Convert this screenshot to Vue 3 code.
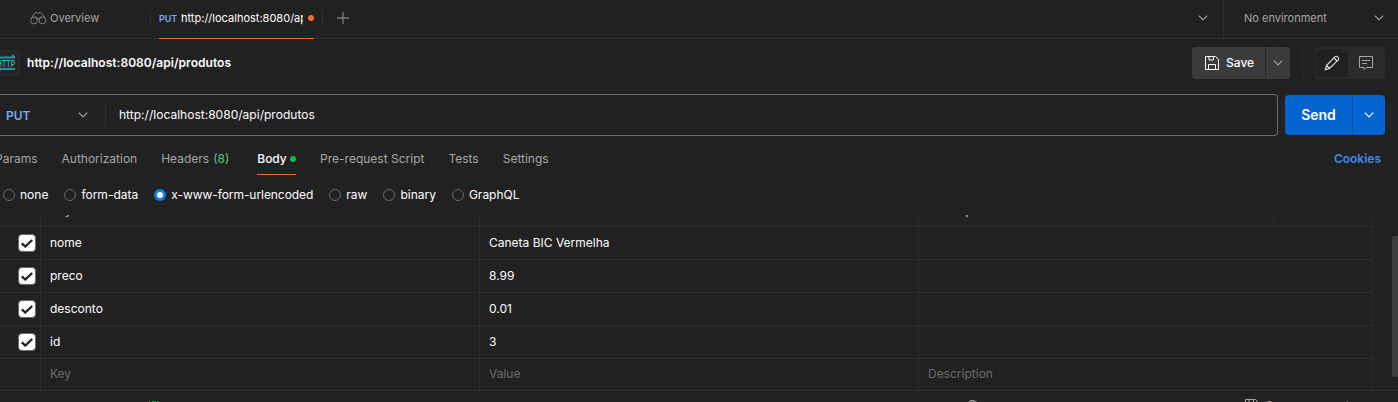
<script setup>
const methods = [
  { label: 'Params' },
  { label: 'Authorization' },
  { label: 'Headers', count: '(8)' },
  { label: 'Body', active: true },
  { label: 'Pre-request Script' },
  { label: 'Tests' },
  { label: 'Settings' },
]
const bodyTypes = ['none', 'form-data', 'x-www-form-urlencoded', 'raw', 'binary', 'GraphQL']
const rows = [
  ['nome', 'Caneta BIC Vermelha'],
  ['preco', '8.99'],
  ['desconto', '0.01'],
  ['id', '3'],
]
</script>

<template>
  <div class="app">
    <header class="tabbar">
      <div class="tab overview">
        <svg width="17" height="14" viewBox="0 0 17 14" class="ico">
          <circle cx="4" cy="9.5" r="3.4" /><circle cx="12.4" cy="9.5" r="3.4" />
          <path d="M1.300 7.300 4.600 2.200Q5.800.7 7.400 1.900M15.200 7.300 11.800 2.200Q10.600.7 9 1.900M7.400 1.900q.8.7 1.600 0M7.200 8.200q1-.9 2 0M5.300 5.300l2 2.600M11.100 5.300l-2 2.600" />
        </svg>
        <span>Overview</span>
      </div>
      <i class="sep"></i>
      <div class="tab request">
        <b>PUT</b><span class="clip">http://localhost:8080/api/produtos</span><i class="dot orange"></i>
      </div>
      <i class="sep"></i>
      <svg class="plus" width="12" height="12" viewBox="0 0 12 12"><path d="M6 0v12M0 6h12" /></svg>
      <svg class="chev more" width="10" height="6" viewBox="0 0 10 6"><path d="M.8.7 5 4.900 9.200.7" /></svg>
      <div class="env">
        <span>No environment</span>
        <svg class="chev" width="10" height="6" viewBox="0 0 10 6"><path d="M.8.7 5 4.900 9.200.7" /></svg>
      </div>
    </header>

    <section class="titlebar">
      <div class="http">
        <svg width="21" height="18" viewBox="0 0 21 18">
          <path d="M3 3.500h18M18 .8l2.600 2.700M3 15h18M6 17.800l-2.600-2.800" stroke="#2f8f9c" stroke-width="1.900" />
          <text x="3" y="12.500" textLength="18" lengthAdjust="spacingAndGlyphs">HTTP</text>
        </svg>
      </div>
      <h1>http://localhost:8080/api/produtos</h1>
      <div class="save">
        <button class="savemain">
          <svg width="14" height="14" viewBox="0 0 14 14"><path d="M.5.5h10l3 3v10H.5zM3.500 13.500v-5h7v5M4 .5v3.500h4.500V.5" /></svg>
          <span>Save</span>
        </button>
        <button class="savemore"><svg class="chev" width="10" height="6" viewBox="0 0 10 6"><path d="M.8.7 5 4.900 9.200.7" /></svg></button>
      </div>
      <i class="vline"></i>
      <div class="modes">
        <span class="on"><svg width="16" height="16" viewBox="0 0 16 16" fill="none" stroke="#e6e6e6" stroke-width="1.100"><path d="m1.300 14.700 1.200-4.200 8.600-8.800a1.500 1.500 0 0 1 2.200 0l1 1a1.500 1.500 0 0 1 0 2.200L5.500 13.500zM10 3l3 3M2.500 10.500l3 3" /></svg></span>
        <span><svg width="14" height="14" viewBox="0 0 14 14" fill="none" stroke="#a6a6a6"><path d="M.5.5h13v11H7l-2 2v-2H.5zM3 4.500h8M3 7.500h5" /></svg></span>
      </div>
    </section>

    <section class="urlrow">
      <div class="urlbox">
        <div class="method"><b>PUT</b><svg class="chev" width="10" height="6" viewBox="0 0 10 6"><path d="M.8.7 5 4.900 9.200.7" /></svg></div>
        <span class="url">http://localhost:8080/api/produtos</span>
      </div>
      <div class="send"><b>Send</b><span><svg class="chev white" width="10" height="6" viewBox="0 0 10 6"><path d="M.8.7 5 4.900 9.200.7" /></svg></span></div>
    </section>

    <nav class="subtabs">
      <div v-for="m in methods" :key="m.label" class="subtab" :class="{ active: m.active, counted: m.count }">
        {{ m.label }}<em v-if="m.count">{{ m.count }}</em><i v-if="m.active" class="dot green"></i>
      </div>
      <a class="cookies">Cookies</a>
    </nav>

    <div class="types">
      <label v-for="t in bodyTypes" :key="t" :class="{ long: t.length > 12 }"><i class="radio" :class="{ checked: t === 'x-www-form-urlencoded' }"></i>{{ t }}</label>
    </div>

    <main class="table">
      <div class="row head">
        <div></div><div><span>Key</span></div><div><span>Value</span></div><div><span>Description</span></div><div class="bulk"></div>
      </div>
      <div v-for="r in rows" :key="r[0]" class="row">
        <div class="check"><span class="box"><svg width="12" height="9" viewBox="0 0 12 9"><path d="M.8 4.300 4.300 7.500 11.200 1" /></svg></span></div>
        <div>{{ r[0] }}</div><div>{{ r[1] }}</div><div></div>
      </div>
      <div class="row blank"><div></div><div>Key</div><div>Value</div><div>Description</div></div>
      <i class="scroll"></i>
    </main>

    <footer class="response">
      <span class="count">(5)</span>
      <svg class="globe" width="13" height="13" viewBox="0 0 13 13"><circle cx="6.500" cy="6.500" r="6" /><ellipse cx="6.500" cy="6.500" rx="2.800" ry="6" /></svg>
      <svg class="disk" width="14" height="14" viewBox="0 0 14 14"><path d="M.5.5h10l3 3v10H.5zM4 .5v4h4.500V.5" /></svg>
      <span class="example">Save as example</span>
    </footer>
  </div>
</template>

<style>
body { background: #212121; overflow: hidden; }
</style>

<style scoped>
* { box-sizing: border-box; }
.app { width: 1398px; height: 402px; overflow: hidden; background: #212121; color: #fff; font: 12px/16px Inter, sans-serif; display: flex; flex-direction: column; }
svg { display: block; flex: none; fill: none; }
button { border: 0; padding: 0; margin: 0; background: none; color: inherit; font: inherit; }
i { display: block; flex: none; }
.chev { stroke: #a6a6a6; stroke-width: 1.1; }
.white { stroke: #fff; }
.dot { width: 6px; height: 6px; border-radius: 50%; }
.orange { background: #ff6c37; }
.green { background: #0cbb52; margin-left: 3px; }

.tabbar { height: 39px; flex: none; display: flex; align-items: center; border-bottom: 1px solid #2e2e2e; padding-left: 30px; padding-bottom: 2px; color: #a6a6a6; font-size: 11px; }
.overview { width: 120px; display: flex; gap: 3px; align-items: center; }
.ico { stroke: #808080; }
.sep { width: 1px; height: 16px; background: #303030; }
.request { width: 155px; height: 39px; margin: 3px 8px 0; padding-bottom: 2px; display: flex; align-items: center; border-bottom: 1px solid #ff6c37; color: #fff; }
.request b { font-size: 9px; font-weight: 600; letter-spacing: -0.1px; color: #74aef6; width: 22px; padding-top: 1px; }
.clip { width: 121.5px; overflow: hidden; white-space: nowrap; letter-spacing: 0.01px; }
.request .dot { margin-left: 5.5px; }
.plus { margin-left: 14px; stroke: #7d7d7d; stroke-width: 1.3; }
.more { margin-left: auto; margin-right: 15px; }
.env { width: 175px; height: 38px; margin-bottom: -2px; border-left: 1px solid #2e2e2e; padding: 0 14px 2px 20px; display: flex; align-items: center; justify-content: space-between; }

.titlebar { height: 55px; padding-bottom: 7px; flex: none; display: flex; align-items: center; padding-right: 13px; }
.http { width: 26px; height: 26px; border: 1px solid #2c2c2c; border-radius: 4px; background: #262626; margin-left: -6px; display: flex; align-items: center; }
.http svg { margin-left: -1px; }
.http text { font: 500 9.5px Inter, sans-serif; fill: #2fc0d0; }
h1 { margin: 0 auto 0 7px; font-size: 12px; line-height: 16px; font-weight: 600; letter-spacing: 0.04px; }
.save { display: flex; height: 32px; width: 98px; border-radius: 4px; background: #3b3b3b; overflow: hidden; }
.savemain { width: 73px; padding-left: 13px; display: flex; align-items: center; gap: 7px; font-weight: 500; }
.savemain svg { stroke: #fff; }
.savemore { flex: 1; border-left: 1px solid #292929; display: flex; align-items: center; justify-content: center; }
.vline { width: 1px; height: 32px; background: #2c2c2c; margin: 0 12px; }
.modes { width: 70px; height: 32px; border-radius: 4px; background: #2b2b2b; display: flex; padding: 2px 1px; }
.modes span { width: 32px; height: 28px; border-radius: 3px; display: flex; align-items: center; justify-content: center; }
.modes .on { background: #212121; margin-right: 2px; }

.urlrow { height: 42px; flex: none; display: flex; align-items: center; }
.urlbox { width: 1278px; height: 42px; border: 1px solid #6b6b6b; border-left: 0; border-radius: 0 4px 4px 0; display: flex; align-items: center; }
.method { width: 106px; height: 24px; border-right: 1px solid #303030; padding: 0 17px 0 6px; display: flex; align-items: center; justify-content: space-between; }
.method b { color: #74aef6; font-weight: 600; padding-top: 2px; }
.url { margin-left: 13px; letter-spacing: 0.02px; }
.send { margin-left: 7px; width: 100px; height: 40px; border-radius: 4px; background: #0265d2; display: flex; align-items: center; }
.send b { width: 67px; text-align: center; font-size: 14px; font-weight: 600; }
.send span { flex: 1; height: 40px; border-left: 1px solid #0453ac; display: flex; align-items: center; justify-content: center; }

.subtabs { height: 46px; padding: 7px 17px 7px 0; margin-left: -5px; flex: none; display: flex; gap: 24px; color: #a6a6a6; }
.subtab { height: 32px; display: flex; align-items: center; white-space: nowrap; border-bottom: 1px solid transparent; }
.subtab em { font-style: normal; color: #5dc58c; margin-left: 4px; }
.counted { margin-right: 4px; }
.subtab.active { color: #fff; border-color: #ff6c37; font-weight: 500; letter-spacing: -0.1px; margin-right: 0.6px; }
.cookies { margin-left: auto; line-height: 32px; color: #3d8bf0; font-weight: 600; }

.types { height: 33px; flex: none; padding: 0 0 7px 3px; display: flex; align-items: center; gap: 16px; }
.types label { display: flex; align-items: center; gap: 5px; }
.long { letter-spacing: -0.06px; }
.radio { width: 12px; height: 12px; border: 1px solid #6b6b6b; border-radius: 50%; }
.checked { border: 3px solid #097bed; background: #fff; }

.table { position: relative; height: 176px; flex: none; border-bottom: 1px solid #2d2d2d; }
.row { width: 1373px; height: 33px; display: grid; grid-template-columns: 41px 439px 439px 454px; border-bottom: 1px solid #2d2d2d; }
.row > div { border-right: 1px solid #2d2d2d; padding-left: 9px; display: flex; align-items: center; }
.head { height: 12px; grid-template-columns: 41px 439px 439px 355px 99px; overflow: hidden; color: #a6a6a6; }
.head > div { height: 11px; align-items: flex-start; font-weight: 600; }
.head span { margin-top: -12px; }
.blank { height: 31px; border: 0; color: #6b6b6b; }
.row.blank > div { padding-bottom: 2px; }
.row > .check { padding-left: 18px; }
.box { width: 18px; height: 18px; border: 1px solid #6b6b6b; border-radius: 4px; background: #fff; display: flex; align-items: center; justify-content: center; }
.box path { stroke: #212121; stroke-width: 2.3; }
.scroll { position: absolute; left: 1392px; top: 21px; width: 6px; height: 141px; border-radius: 3px 0 0 3px; background: #3d3d3d; }

.response { height: 11px; flex: none; overflow: hidden; display: flex; align-items: flex-start; color: #a6a6a6; font-size: 11px; }
.count { margin: 6px 0 0 147px; width: 819px; color: #0cbb52; font-size: 10px; }
.response svg { stroke: #a6a6a6; }
.globe { margin: 9px 266px 0 0; }
.disk { margin-top: 8px; }
.example { margin: 6px 0 0 7px; letter-spacing: 0.1px; }
</style>
